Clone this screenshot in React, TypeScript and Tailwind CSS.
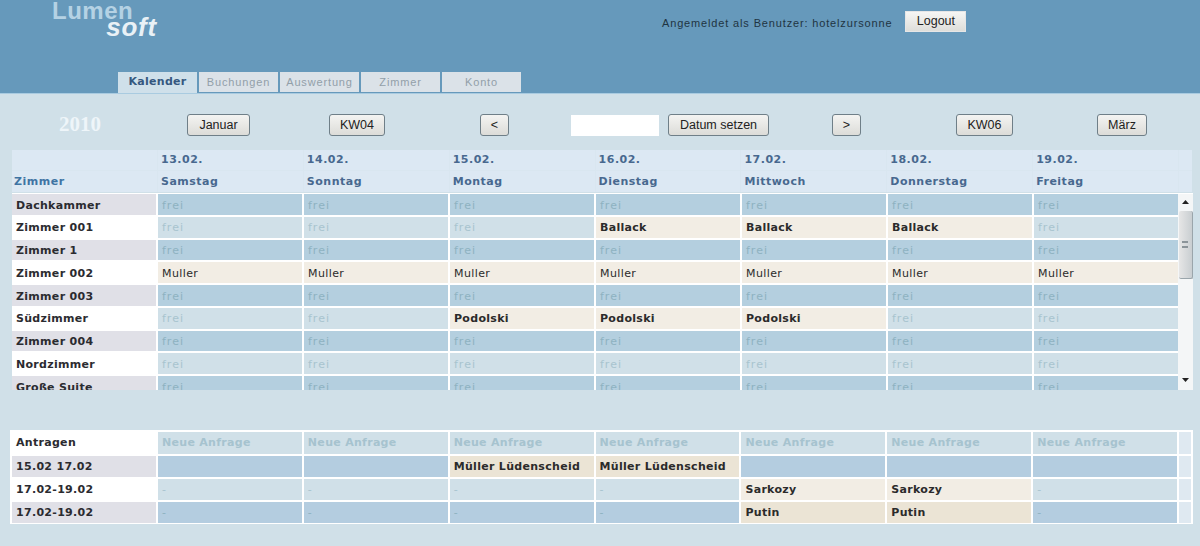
import React from "react";

const days = [
  ["13.02.", "Samstag"],
  ["14.02.", "Sonntag"],
  ["15.02.", "Montag"],
  ["16.02.", "Dienstag"],
  ["17.02.", "Mittwoch"],
  ["18.02.", "Donnerstag"],
  ["19.02.", "Freitag"],
];

const rooms: [string, string[]][] = [
  ["Dachkammer", [] as string[]],
  ["Zimmer 001", ["", "", "", "Ballack", "Ballack", "Ballack", ""]],
  ["Zimmer 1", []],
  ["Zimmer 002", ["Muller", "Muller", "Muller", "Muller", "Muller", "Muller", "Muller"]],
  ["Zimmer 003", []],
  ["Südzimmer", ["", "", "Podolski", "Podolski", "Podolski", "", ""]],
  ["Zimmer 004", []],
  ["Nordzimmer", []],
  ["Große Suite", []],
];

const requests: [string, string[], string][] = [
  ["15.02 17.02", ["", "", "Müller Lüdenscheid", "Müller Lüdenscheid", "", "", ""], ""],
  ["17.02-19.02", ["", "", "", "", "Sarkozy", "Sarkozy", ""], "-"],
  ["17.02-19.02", ["", "", "", "", "Putin", "Putin", ""], "-"],
];

const tabs = ["Kalender", "Buchungen", "Auswertung", "Zimmer", "Konto"];

function NavButton({ label, className }: { label: string; className: string }) {
  return (
    <button className={"h-[22px] rounded-[3px] border border-[#6f7f88] bg-gradient-to-b from-[#f4f4f2] to-[#dcdcd8] text-[12.5px] text-[#222] font-['Liberation_Sans',sans-serif] " + className}>
      {label}
    </button>
  );
}

export default function App() {
  return (
    <div className="flex h-screen w-full flex-col overflow-hidden bg-[#d0e0e8] font-['DejaVu_Sans',sans-serif] text-[11px]">
      {/* header */}
      <div className="relative h-[94px] shrink-0 border-b border-[#a9cbe0] bg-[#6699bb]">
        <div className="flex items-start pl-[52px]">
          <div className="w-[105px] font-['Liberation_Sans',sans-serif] font-bold">
            <div className="text-[24px] leading-[22px] tracking-[0.5px] text-[#b5d2e4]">Lumen</div>
            <div className="mt-[-7px] text-right text-[26px] italic leading-[24px] tracking-[0.8px] text-[#e9f1f6]">soft</div>
          </div>
          <div className="ml-[505px] mt-[15px] font-['Liberation_Sans',sans-serif] text-[11px] tracking-[0.85px] text-[#1f3442]">
            Angemeldet als Benutzer: hotelzursonne
          </div>
          <button className="ml-[13px] mt-[11px] h-[21px] w-[61px] border border-[#e6e6e6] bg-gradient-to-b from-[#f6f6f4] to-[#dededa] font-['Liberation_Sans',sans-serif] text-[12.5px] text-[#222]">
            Logout
          </button>
        </div>
        <div className="absolute bottom-0 left-[118px] flex gap-[2px]">
          {tabs.map((t, i) => (
            <div
              key={t}
              className={
                i === 0
                  ? "flex h-[21px] w-[79px] items-center justify-center bg-[#cfe0ea] font-bold tracking-[0.3px] text-[#35587f]"
                  : "flex h-[20px] w-[79px] items-center justify-center bg-[#dbe2e8] font-['Liberation_Sans',sans-serif] tracking-[0.85px] text-[#929fa9]"
              }
            >
              {t}
            </div>
          ))}
        </div>
      </div>

      {/* week navigation */}
      <div className="mt-[20px] flex h-[22px] shrink-0 items-center pl-[59px]">
        <div className="w-[128px] font-['Liberation_Serif',serif] text-[21px] font-bold text-[#eef5f9]">2010</div>
        <NavButton label="Januar" className="w-[63px]" />
        <NavButton label="KW04" className="ml-[79px] w-[56px]" />
        <NavButton label="<" className="ml-[95px] w-[29px]" />
        <input className="ml-[62px] h-[21px] w-[88px] bg-white" />
        <NavButton label="Datum setzen" className="ml-[9px] w-[101px]" />
        <NavButton label=">" className="ml-[63px] w-[29px]" />
        <NavButton label="KW06" className="ml-[95px] w-[57px]" />
        <NavButton label="März" className="ml-[84px] w-[50px]" />
      </div>

      {/* column headers */}
      <div className="ml-[12px] mt-[14px] flex w-[1180px] flex-col gap-[1px] bg-[#d9e6f0] font-bold tracking-[0.5px]">
        <div className="flex h-[20px] gap-[1px]">
          <div className="w-[145px] bg-[#dce8f3]" />
          {days.map(([d]) => (
            <div key={d} className="flex flex-1 items-center bg-[#dce8f3] pl-[3px] text-[#48688f]">{d}</div>
          ))}
          <div className="w-[13px] bg-[#dce8f3]" />
        </div>
        <div className="flex h-[21px] gap-[1px]">
          <div className="flex w-[145px] items-center bg-[#dce8f3] pl-[2px] pt-[1px] text-[#3f74a3]">Zimmer</div>
          {days.map(([d, n]) => (
            <div key={d} className="flex flex-1 items-center bg-[#dce8f3] pl-[3px] pt-[1px] text-[#48688f]">{n}</div>
          ))}
          <div className="w-[13px] bg-[#dce8f3]" />
        </div>
      </div>

      {/* room table */}
      <div className="ml-[12px] mt-[1px] flex h-[197px] w-[1181px] shrink-0 bg-white pt-[1px]">
        <div className="flex h-[196px] flex-1 flex-col gap-[2px] overflow-hidden">
          {rooms.map(([name, cells], r) => (
            <div key={name} className="flex h-[20.75px] shrink-0 gap-[2px]">
              <div className={(r % 2 === 0 ? "bg-[#e0e0e7] " : "bg-white ") + "flex w-[144px] items-center pl-[4px] pt-[3px] font-bold tracking-[0.3px] text-[#2b2b30]"}>
                {name}
              </div>
              {days.map(([d], c) => {
                const guest = cells[c];
                if (guest) {
                  return (
                    <div key={d} className={(guest === "Muller" ? "tracking-[0.4px] " : "font-bold tracking-[0.3px] ") + "flex flex-1 items-center bg-[#f2ede4] pl-[4px] pt-[3px] text-[#2b2b2b]"}>
                      {guest}
                    </div>
                  );
                }
                return (
                  <div key={d} className={(r % 2 === 0 ? "bg-[#b4cfdf] text-[#8eb2c1] " : "bg-[#d0e0e8] text-[#a8c4cf] ") + "flex flex-1 items-center pl-[4px] pt-[3px] tracking-[1px]"}>
                    frei
                  </div>
                );
              })}
            </div>
          ))}
        </div>
        {/* scrollbar */}
        <div className="flex w-[15px] flex-col items-center bg-[#f4f6f7]">
          <svg width="7" height="4" viewBox="0 0 7 4" className="mb-[7px] mt-[6px]"><path d="M3.5 0 7 4H0z" fill="#222" /></svg>
          <div className="flex h-[68px] w-[14px] items-center justify-center rounded-[2px] border-b border-r border-[#9aa5ab] bg-gradient-to-r from-[#e6e6e6] to-[#c9ced1]">
            <div className="h-[7px] w-[6px] border-y-2 border-[#8b9499]" />
          </div>
          <svg width="7" height="4" viewBox="0 0 7 4" className="mt-[99px]"><path d="M0 0h7L3.5 4z" fill="#222" /></svg>
        </div>
      </div>

      {/* requests table */}
      <div className="ml-[10px] mt-[40px] flex w-[1183px] flex-col gap-[2px] bg-white px-[2px] pb-[1px] pt-[2px] tracking-[0.3px]">
        <div className="flex h-[22px] gap-[2px]">
          <div className="flex w-[144px] items-center bg-white pl-[4px] font-bold text-[#2b2b30]">Antragen</div>
          {days.map(([d]) => (
            <div key={d} className="flex flex-1 items-center bg-[#d0e0e8] pl-[4px] font-bold text-[#a6c3cf]">Neue Anfrage</div>
          ))}
          <div className="w-[12px] bg-[#dfe9f1]" />
        </div>
        {requests.map(([range, cells, empty], r) => (
          <div key={r} className="flex h-[21px] gap-[2px]">
            <div className={(r === 1 ? "bg-white " : "bg-[#e0e0e7] ") + "flex w-[144px] items-center pl-[4px] pt-[1px] font-bold text-[#2b2b30]"}>
              {range}
            </div>
            {days.map(([d], c) => {
              const guest = cells[c];
              if (guest) {
                return (
                  <div key={d} className={(r === 1 ? "bg-[#f2ede4] " : "bg-[#ebe4d5] ") + "flex flex-1 items-center pl-[4px] pt-[1px] font-bold text-[#2b2b2b]"}>
                    {guest}
                  </div>
                );
              }
              return (
                <div key={d} className={(r === 1 ? "bg-[#d0e0e8] text-[#a8c4cf] " : "bg-[#b4cde0] text-[#8eb2c1] ") + "flex flex-1 items-center pl-[4px] pt-[1px]"}>
                  {empty}
                </div>
              );
            })}
            <div className="w-[12px] bg-[#dfe9f1]" />
          </div>
        ))}
      </div>
    </div>
  );
}
